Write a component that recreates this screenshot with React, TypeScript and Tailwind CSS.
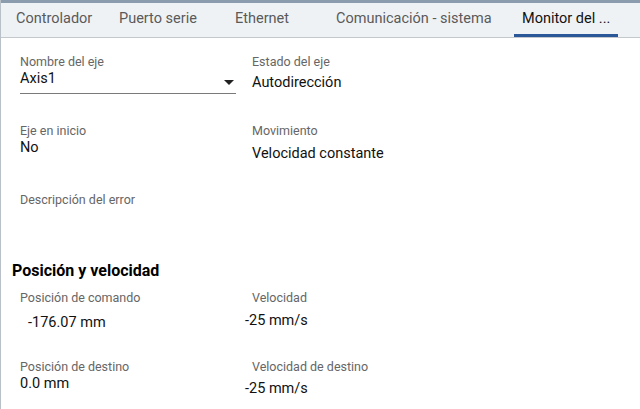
const tabs = [
  { label: "Controlador", w: "w-[103px]" },
  { label: "Puerto serie", w: "w-[116px]" },
  { label: "Ethernet", w: "w-[101px]" },
  { label: "Comunicación - sistema", w: "w-[186px]" },
];

function Field({
  label,
  value,
  valueClass = "",
}: {
  label: string;
  value?: string;
  valueClass?: string;
}) {
  return (
    <div className="flex flex-col">
      <span className="text-[12.5px] leading-4 text-[#666666]">{label}</span>
      {value && (
        <span className={`text-[14.5px] leading-5 text-[#111111] ${valueClass}`}>
          {value}
        </span>
      )}
    </div>
  );
}

export default function App() {
  return (
    <div
      className="h-[409px] w-[640px] overflow-hidden border-l border-[#b9c0c8] bg-white"
      style={{ fontFamily: "Roboto, 'Liberation Sans', sans-serif" }}
    >
      {/* Tab bar */}
      <div className="h-[3px] bg-[#8b9cae]" />
      <div className="flex h-[35px] border-b border-[#c4c8cc] bg-[#eff2f5] pl-[7px]">
        {tabs.map((t) => (
          <div
            key={t.label}
            className={`${t.w} flex items-center whitespace-nowrap px-2 pb-[3px] text-[14.5px] text-[#5a5a5a]`}
          >
            {t.label}
          </div>
        ))}
        <div className="flex w-[104px] items-center whitespace-nowrap border-b-[3px] border-[#2a5798] px-2 text-[14.5px] text-[#111111]">
          Monitor del ...
        </div>
      </div>

      {/* Eje */}
      <div className="grid grid-cols-[216px_1fr] gap-x-4 pl-[19px] pt-[16px]">
        <div className="flex h-[56px] flex-col">
          <span className="text-[12.5px] leading-4 text-[#666666]">Nombre del eje</span>
          <div className="flex items-center justify-between border-b border-[#7a7a7a] pb-[5px]">
            <span className="text-[14.5px] leading-[18px] text-[#111111]">Axis1</span>
            <svg width="10" height="6" viewBox="0 0 10 6" className="mr-[2px] mt-[8px]">
              <path d="M0 0 L10 0 L5 5 Z" fill="#222" />
            </svg>
          </div>
        </div>
        <Field label="Estado del eje" value="Autodirección" valueClass="mt-[3px]" />

        <div className="h-[80px] pt-[13px]">
          <Field label="Eje en inicio" value="No" valueClass="-mt-[1px]" />
        </div>
        <div className="h-[80px] pt-[13px]">
          <Field label="Movimiento" value="Velocidad constante" valueClass="mt-[5px]" />
        </div>

        <div className="col-span-2 h-[60px] pt-[2px]">
          <Field label="Descripción del error" />
        </div>
      </div>

      {/* Posición y velocidad */}
      <h2 className="mt-[11px] pl-[11px] text-[16px] font-bold leading-5 text-black">
        Posición y velocidad
      </h2>
      <div className="grid grid-cols-[216px_1fr] gap-x-4 pl-[19px] pt-[9px]">
        <Field label="Posición de comando" value="-176.07 mm" valueClass="ml-[8px] mt-[7px]" />
        <Field label="Velocidad" value="-25 mm/s" valueClass="-ml-[7px] mt-[5px]" />

        <div className="pt-[26px]">
          <Field label="Posición de destino" value="0.0 mm" valueClass="-mt-[1px]" />
        </div>
        <div className="pt-[26px]">
          <Field label="Velocidad de destino" value="-25 mm/s" valueClass="-ml-[7px] mt-[4px]" />
        </div>
      </div>
    </div>
  );
}
